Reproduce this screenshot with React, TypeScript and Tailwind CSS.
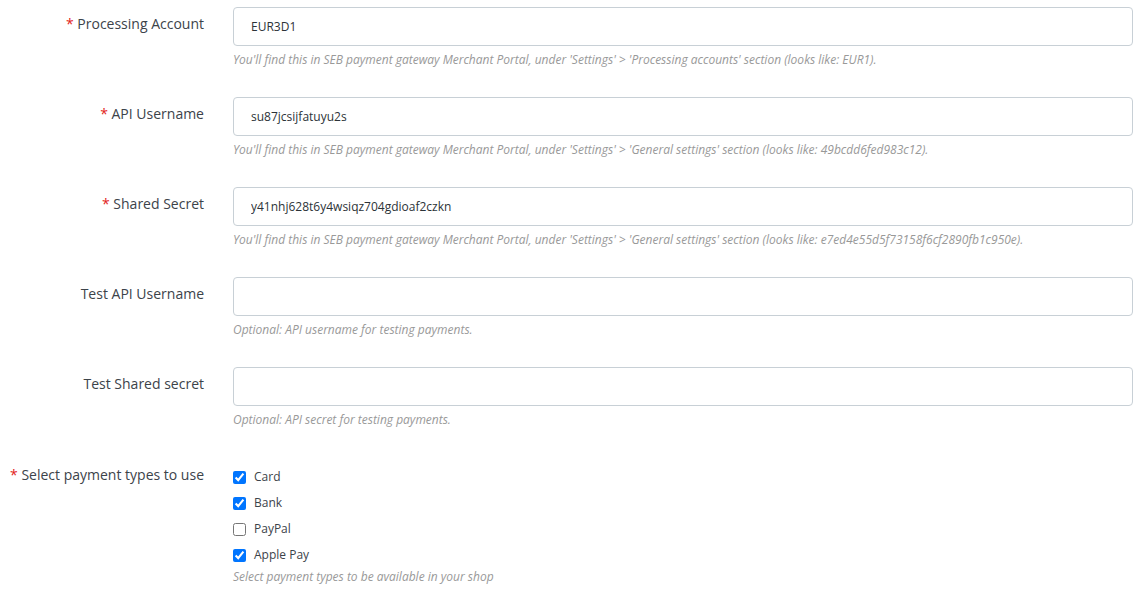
import { useState } from 'react'

type Field = {
  label: string
  required: boolean
  value: string
  help: string
}

const fields: Field[] = [
  {
    label: 'Processing Account',
    required: true,
    value: 'EUR3D1',
    help: "You'll find this in SEB payment gateway Merchant Portal, under 'Settings' > 'Processing accounts' section (looks like: EUR1).",
  },
  {
    label: 'API Username',
    required: true,
    value: 'su87jcsijfatuyu2s',
    help: "You'll find this in SEB payment gateway Merchant Portal, under 'Settings' > 'General settings' section (looks like: 49bcdd6fed983c12).",
  },
  {
    label: 'Shared Secret',
    required: true,
    value: 'y41nhj628t6y4wsiqz704gdioaf2czkn',
    help: "You'll find this in SEB payment gateway Merchant Portal, under 'Settings' > 'General settings' section (looks like: e7ed4e55d5f73158f6cf2890fb1c950e).",
  },
  {
    label: 'Test API Username',
    required: false,
    value: '',
    help: 'Optional: API username for testing payments.',
  },
  {
    label: 'Test Shared secret',
    required: false,
    value: '',
    help: 'Optional: API secret for testing payments.',
  },
]

export default function App() {
  const [values, setValues] = useState(fields.map((f) => f.value))
  const [types, setTypes] = useState([
    { name: 'Card', checked: true },
    { name: 'Bank', checked: true },
    { name: 'PayPal', checked: false },
    { name: 'Apple Pay', checked: true },
  ])

  return (
    <div className="bg-white min-h-screen pr-[10px] font-['Open_Sans',sans-serif] text-[#3c434a]">

      {fields.map((field, i) => (
        <div
          key={field.label}
          className="grid grid-cols-[204px_1fr] gap-x-[29px] pt-[7px] pb-[22px]"
        >
          {/* LABEL */}
          <label className="text-right text-[14px] leading-[20px] pt-[7px]">
            {field.required && <span className="text-[#e2231a]">* </span>}
            {field.label}
          </label>

          <div>
            <input
              value={values[i]}
              onChange={(e) => {
                const next = [...values]
                next[i] = e.target.value
                setValues(next)
              }}
              className="
                w-full
                h-[39px]
                border
                border-[#c8d0d6]
                rounded-[4px]
                pl-[17px]
                text-[12px]
                text-[#2c3338]
                outline-none
              "
            />
            <p className="mt-[5px] text-[12px] leading-[17px] italic text-[#999999]">
              {field.help}
            </p>
          </div>
        </div>
      ))}

      {/* PAYMENT TYPES */}

      <div className="grid grid-cols-[204px_1fr] gap-x-[29px] pt-[14px]">
        <label className="text-right text-[14px] leading-[20px] pt-[1px]">
          <span className="text-[#e2231a]">* </span>
          Select payment types to use
        </label>

        <div>
          {types.map((t, i) => (
            <label key={t.name} className="flex items-center h-[26px] text-[12px] text-[#3c434a]">
              <input
                type="checkbox"
                checked={t.checked}
                onChange={() => {
                  const next = [...types]
                  next[i] = { ...t, checked: !t.checked }
                  setTypes(next)
                }}
                className="m-0 w-[13px] h-[13px] accent-[#0075ff]"
              />
              <span className="ml-[8px]">{t.name}</span>
            </label>
          ))}
          <p className="text-[12px] leading-[17px] italic text-[#999999]">
            Select payment types to be available in your shop
          </p>
        </div>
      </div>

    </div>
  )
}
